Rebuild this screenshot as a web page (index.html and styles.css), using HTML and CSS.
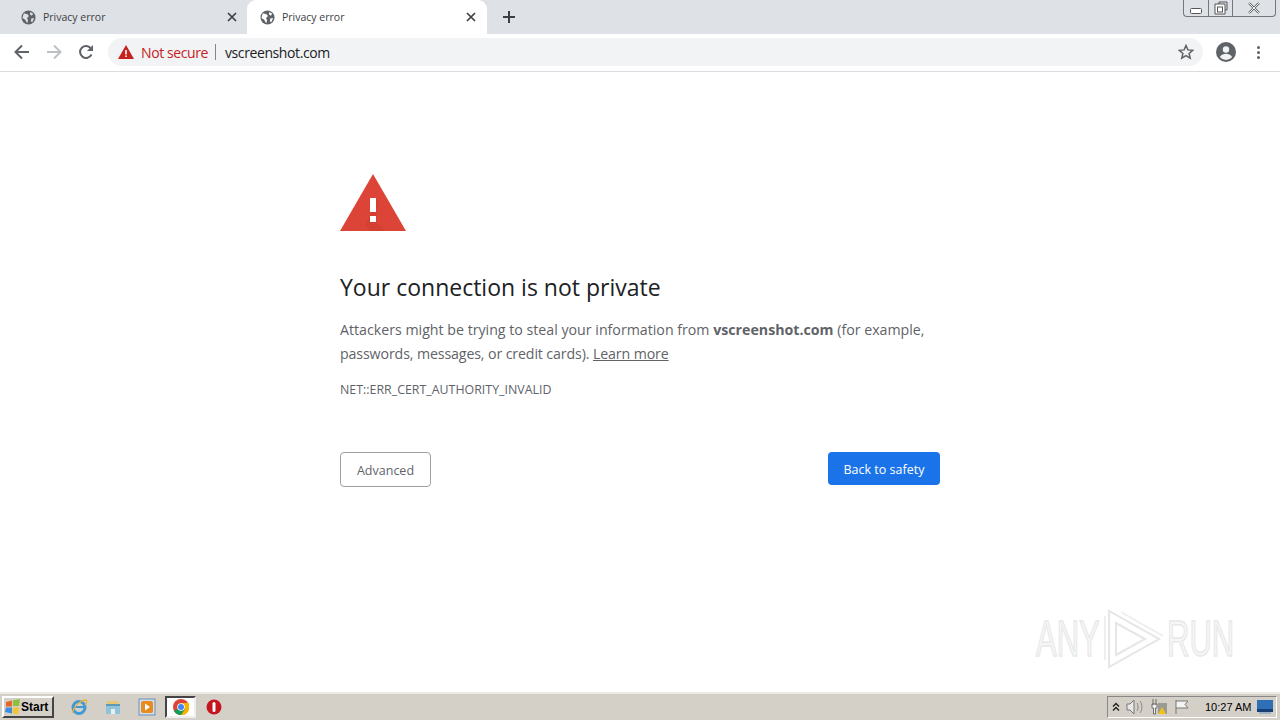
FILE: index.html
```html
<!DOCTYPE html>
<html lang="en">
<head>
  <meta charset="UTF-8" />
  <meta name="viewport" content="width=device-width, initial-scale=1.0" />
  <title>Privacy error</title>
  <link rel="stylesheet" href="styles.css">
</head>
<body>

  <header class="tabstrip">
    <div class="tab">
      <svg class="favicon" viewBox="0 0 16 16"><circle cx="8" cy="8" r="7.5" fill="#5f6368"/><path d="M3 3.500l4 1 1.500 2-2 2 1 3-1 2.500-2-3.500-3-2zM10 2l3 2-1.500 2-2-1.500zM11 9l3-.5-2 4.500-1.500-1z" fill="#dee1e6"/></svg>
      <span class="tab-title">Privacy error</span>
      <svg class="tab-close" viewBox="0 0 10 10"><path d="M1 1l8 8M9 1l-8 8" stroke="#3c4043" stroke-width="1.700"/></svg>
    </div>
    <div class="tab active">
      <svg class="favicon" viewBox="0 0 16 16"><circle cx="8" cy="8" r="7.500" fill="#5f6368"/><path d="M3 3.500l4 1 1.500 2-2 2 1 3-1 2.500-2-3.500-3-2zM10 2l3 2-1.500 2-2-1.500zM11 9l3-.5-2 4.500-1.500-1z" fill="#fff"/></svg>
      <span class="tab-title">Privacy error</span>
      <svg class="tab-close" viewBox="0 0 10 10"><path d="M1 1l8 8M9 1l-8 8" stroke="#3c4043" stroke-width="1.700"/></svg>
    </div>
    <svg class="new-tab" viewBox="0 0 12 12"><path d="M6 0v12M0 6h12" stroke="#3c4043" stroke-width="2"/></svg>
    <div class="window-controls">
      <span class="win-btn min"><svg viewBox="0 0 12 6" width="12" height="6"><rect x=".5" y=".5" width="11" height="5" rx="1" fill="#fff" stroke="#555"/></svg></span>
      <span class="win-btn max"><svg viewBox="0 0 14 14" width="14" height="14"><path d="M5 3V1h8v8h-2" fill="none" stroke="#555"/><path d="M3 3h8v10H1V3z" fill="#fff" stroke="#555"/><rect x="3.500" y="6" width="5" height="5" fill="none" stroke="#555"/></svg></span>
      <span class="win-btn close"><svg viewBox="0 0 14 12" width="14" height="12"><path d="M2 1l10 10M12 1L2 11" stroke="#666" stroke-width="2.400"/><path d="M2 1l10 10M12 1L2 11" stroke="#eee" stroke-width="1"/></svg></span>
    </div>
  </header>

  <div class="toolbar">
    <svg class="nav-icon" viewBox="0 0 16 16"><path d="M15 8H2M8 1.500L1.500 8 8 14.500" fill="none" stroke="#5f6368" stroke-width="2"/></svg>
    <svg class="nav-icon" viewBox="0 0 16 16"><path d="M1 8h13M8 1.500L14.500 8 8 14.500" fill="none" stroke="#bdc1c6" stroke-width="2"/></svg>
    <svg class="nav-icon" viewBox="0 0 16 16"><path d="M13.500 10.500A6 6 0 1 1 13 4.500" fill="none" stroke="#5f6368" stroke-width="2"/><path d="M15 1v6H9z" fill="#5f6368"/></svg>
    <div class="omnibox">
      <svg class="warn-icon" viewBox="0 0 16 14"><path d="M8 0l8 14H0z" fill="#c5221f"/><path d="M7.200 5h1.600v4.500H7.200zM7.200 10.500h1.600V12H7.200z" fill="#fff"/></svg>
      <span class="not-secure">Not secure</span>
      <span class="omni-sep"></span>
      <span class="url">vscreenshot.com</span>
      <svg class="star" viewBox="0 0 16 16"><path d="M8 1.500l1.900 4.400 4.800.4-3.600 3.200 1.100 4.700L8 11.700l-4.200 2.500 1.100-4.700-3.600-3.200 4.800-.4z" fill="none" stroke="#5f6368" stroke-width="1.500"/></svg>
    </div>
    <svg class="avatar" viewBox="0 0 20 20"><circle cx="10" cy="10" r="10" fill="#5f6368"/><circle cx="10" cy="7.500" r="3.200" fill="#f1f3f4"/><path d="M3.800 15c1.400-2.300 4-3.200 6.200-3.200s4.800.9 6.200 3.200a8 8 0 0 1-12.400 0z" fill="#f1f3f4"/></svg>
    <div class="menu-dots"><i></i><i></i><i></i></div>
  </div>

  <main class="page">
    <div class="interstitial">
      <svg class="big-warning" viewBox="0 0 66 57">
        <path d="M33 0l33 57H0z" fill="#db4437"/>
        <path d="M36 24l3 6-3 8 1 4-1 6 9 9H30l-4-6z" fill="#c53929" opacity=".35"/>
        <path d="M30 24h6v14h-6zM30 42h6v6h-6z" fill="#fff"/>
      </svg>
      <h1>Your connection is not private</h1>
      <p class="message">Attackers might be trying to steal your information from <strong>vscreenshot.com</strong> (for example, <span class="tight">passwords, messages, or credit cards). <a href="#">Learn more</a></span></p>
      <div class="error-code">NET::ERR_CERT_AUTHORITY_INVALID</div>
      <div class="actions">
        <button class="btn-secondary">Advanced</button>
        <button class="btn-primary">Back to safety</button>
      </div>
    </div>

    <div class="watermark">
      <span>ANY</span>
      <svg viewBox="0 0 62 62" width="62" height="62"><path d="M6 3v56l50-28zM13 15v32l29-16z" fill="none" stroke="#e6e6e6" stroke-width="2"/><path d="M2 8v44M18 4l42 24" fill="none" stroke="#eeeeee" stroke-width="2"/></svg>
      <span>RUN</span>
    </div>
  </main>

  <footer class="taskbar">
    <button class="start-btn">
      <svg viewBox="0 0 16 16" width="16" height="16"><path d="M1 3l6-1.500V7.500H1z" fill="#e8622c"/><path d="M8 1.300L15 0l-1 7H8z" fill="#8dbf3f"/><path d="M1 8.500h6v6L0 13z" fill="#3a8edb"/><path d="M8 8.500h6l-1 7-5-1z" fill="#f5c32c"/></svg>
      Start
    </button>
    <div class="quick-launch">
      <span class="task-icon"><svg viewBox="0 0 18 18" width="18" height="18"><circle cx="9" cy="9.500" r="6" fill="none" stroke="#3f9ad8" stroke-width="3"/><path d="M4 9h10" stroke="#3f9ad8" stroke-width="2"/><path d="M2 15C4 8 11 2 16 2c1.500 1 0 4-1 5" fill="none" stroke="#e8b23a" stroke-width="1.300"/></svg></span>
      <span class="task-icon"><svg viewBox="0 0 18 18" width="18" height="18"><path d="M3 3h11l1 3H3z" fill="#e4c779"/><path d="M2 6h14v10H2z" fill="#8fc3d8"/><path d="M7 16v-5h4v5z" fill="#e9eef0"/><path d="M2 6h14v2H2z" fill="#5c9ab8"/></svg></span>
      <span class="task-icon"><svg viewBox="0 0 18 18" width="18" height="18"><rect x="1" y="1" width="16" height="16" fill="#cfe0f0" stroke="#6d8fb3"/><rect x="3" y="3" width="12" height="12" rx="2" fill="#e88a1c"/><path d="M7 5.500l5 3.500-5 3.500z" fill="#fff"/></svg></span>
      <span class="task-icon active-task"><svg viewBox="0 0 16 16" width="16" height="16"><circle cx="8" cy="8" r="8" fill="#db4437"/><path d="M8 8L1 12a8 8 0 0 0 7 4l4-6z" fill="#0f9d58"/><path d="M8 4h7.500a8 8 0 0 1-7.500 12l4-6z" fill="#f4b400"/><circle cx="8" cy="8" r="3.800" fill="#fff"/><circle cx="8" cy="8" r="3" fill="#4285f4"/></svg></span>
      <span class="task-icon"><svg viewBox="0 0 16 16" width="16" height="16"><circle cx="8" cy="8" r="7.500" fill="#c4161c"/><rect x="6.500" y="3" width="3" height="10" rx="1.500" fill="#fff"/></svg></span>
    </div>
    <div class="tray">
      <svg viewBox="0 0 8 10" width="8" height="10"><path d="M1 4.500L4 1.500l3 3M1 8.500l3-3 3 3" fill="none" stroke="#222" stroke-width="1.400"/></svg>
      <svg viewBox="0 0 18 16" width="18" height="16"><path d="M1 5h3l4-4v14l-4-4H1z" fill="#e8e8e8" stroke="#777"/><path d="M11 4c1.500 2 1.500 6 0 8M14 2c2.500 3 2.500 9 0 12" fill="none" stroke="#888"/></svg>
      <svg viewBox="0 0 18 18" width="18" height="18"><path d="M3 1v6M6 1v6M2 6h5v4H5.500v6H3.500v-6H2z" fill="#eee" stroke="#555" stroke-width=".8"/><rect x="8" y="5" width="9" height="11" fill="#9a9a90"/><path d="M12 9l4 7H8z" fill="#f2c21a"/></svg>
      <svg viewBox="0 0 16 16" width="16" height="16"><path d="M2 1v14M2 2h12l-3 3.500L14 9H2" fill="#f4f4f0" stroke="#777"/></svg>
      <span class="clock">10:27 AM</span>
      <svg viewBox="0 0 16 14" width="16" height="14"><rect width="16" height="12" fill="#2f6fb5"/><rect y="9" width="16" height="3" fill="#173f75"/><rect x="2" y="12" width="12" height="2" fill="#9eb2c6"/></svg>
    </div>
  </footer>

</body>
</html>
```

FILE: styles.css
```css
* {
  box-sizing: border-box;
  margin: 0;
  padding: 0;
}

html, body {
  height: 100%;
}

body {
  display: flex;
  flex-direction: column;
  overflow: hidden;
  background: #fff;
  font-family: 'Open Sans', 'Noto Sans', sans-serif;
  color: #202124;
}

/* browser chrome */
.tabstrip {
  height: 34px;
  flex: none;
  display: flex;
  align-items: stretch;
  padding-left: 8px;
  background: #dee1e6;
}

.tab {
  width: 239px;
  display: flex;
  align-items: center;
  padding: 0 10px 0 13px;
  font-size: 10.500px;
  color: #3c4043;
}

.tab.active {
  width: 240px;
  padding-right: 11px;
  background: #fff;
  border-radius: 9px 9px 0 0;
}

.favicon {
  width: 15px;
  height: 15px;
  margin-right: 7px;
}

.tab-title {
  flex: 1;
}

.tab-close {
  width: 10px;
  height: 10px;
}

.new-tab {
  width: 12px;
  height: 12px;
  margin: 11px 0 0 16px;
}

.window-controls {
  margin-left: auto;
  margin-right: 4px;
  height: 17px;
  display: flex;
  border: 1px solid #777;
  border-top: none;
  border-radius: 0 0 4px 4px;
}

.win-btn {
  display: flex;
  align-items: center;
  justify-content: center;
  border-right: 1px solid #777;
}

.win-btn.min { width: 25px; padding-top: 5px; }
.win-btn.max { width: 24px; }
.win-btn.close { width: 42px; border-right: none; }

.toolbar {
  height: 38px;
  flex: none;
  display: flex;
  align-items: center;
  padding: 0 13px 1px 14px;
  background: #fff;
  border-bottom: 1px solid #dadce0;
}

.nav-icon {
  width: 16px;
  height: 16px;
  margin-right: 16px;
}

.omnibox {
  width: 1095px;
  height: 28px;
  margin-left: -2px;
  display: flex;
  align-items: center;
  padding: 0 10px;
  background: #f1f3f4;
  border-radius: 14px;
  font-size: 14px;
  letter-spacing: -.4px;
}

.warn-icon {
  width: 16px;
  height: 14px;
  margin-right: 7px;
}

.not-secure {
  color: #c5221f;
}

.omni-sep {
  width: 1px;
  height: 16px;
  margin: 0 9px 0 7px;
  background: #80868b;
}

.url {
  flex: 1;
  color: #202124;
}

.star {
  width: 16px;
  height: 16px;
  margin-right: -1px;
}

.avatar {
  width: 20px;
  height: 20px;
  margin-left: 13px;
}

.menu-dots {
  margin-left: 21px;
  display: flex;
  flex-direction: column;
  gap: 2px;
}

.menu-dots i {
  width: 3px;
  height: 3px;
  border-radius: 50%;
  background: #5f6368;
}

/* interstitial */
.page {
  flex: 1;
  position: relative;
  display: flex;
  justify-content: center;
}

.interstitial {
  width: 600px;
  padding-top: 102px;
}

.big-warning {
  display: block;
  width: 66px;
  height: 57px;
  margin-bottom: 39px;
}

h1 {
  font-size: 23px;
  font-weight: 400;
  line-height: 35px;
  color: #202124;
  margin-bottom: 13px;
}

.message {
  font-size: 14.200px;
  line-height: 24px;
  color: #5f6368;
  margin-bottom: 14px;
}

.message strong {
  font-weight: 700;
}

.message a {
  color: #5f6368;
}

.tight {
  letter-spacing: -.12px;
}

.error-code {
  font-size: 12.400px;
  line-height: 20px;
  color: #5f6368;
}

.actions {
  display: flex;
  justify-content: space-between;
  align-items: flex-start;
  margin-top: 52px;
}

button {
  font-family: inherit;
  font-size: 12.500px;
  border-radius: 4px;
}

.btn-secondary {
  width: 91px;
  height: 35px;
  padding-top: 2px;
  background: #fff;
  border: 1px solid #a0a0a0;
  color: #5f6368;
}

.btn-primary {
  width: 112px;
  height: 33px;
  padding-top: 1px;
  background: #1a73e8;
  border: none;
  color: #fff;
}

.watermark {
  position: absolute;
  right: 48px;
  bottom: 22px;
  display: flex;
  align-items: center;
  gap: 2px;
  font-family: 'Liberation Sans', sans-serif;
  font-size: 50px;
  color: #f6f6f6;
  -webkit-text-stroke: 1.500px #e8e8e8;
}

.watermark span {
  width: 65px;
  white-space: nowrap;
  transform: scaleX(.62);
  transform-origin: left center;
}

/* windows taskbar */
.taskbar {
  height: 28px;
  flex: none;
  display: flex;
  align-items: center;
  padding: 0 3px 0 2px;
  background: #d4d0c8;
  border-top: 2px solid #eeebe4;
}

.start-btn {
  width: 52px;
  height: 22px;
  display: flex;
  align-items: center;
  padding-left: 1px;
  background: #d4d0c8;
  border: 2px solid;
  border-color: #fff #444 #444 #fff;
  border-radius: 0;
  font-family: 'Liberation Sans', sans-serif;
  font-size: 12px;
  font-weight: 700;
  color: #000;
}

.quick-launch {
  display: flex;
  align-items: center;
  margin-left: 8px;
}

.task-icon {
  width: 34px;
  height: 22px;
  display: flex;
  align-items: center;
  justify-content: center;
}

.task-icon.active-task {
  width: 31px;
  margin: 0 1px;
  background: #fff;
  border: 2px solid;
  border-color: #444 #eee #eee #444;
}

.tray {
  margin-left: auto;
  width: 170px;
  height: 22px;
  display: flex;
  align-items: center;
  gap: 6px;
  padding: 0 1px 0 4px;
  border: 1px solid;
  border-color: #888 #fff #fff #888;
}

.clock {
  margin-left: 9px;
  font-family: 'Liberation Sans', sans-serif;
  font-size: 11px;
  white-space: nowrap;
  color: #000;
}
```
